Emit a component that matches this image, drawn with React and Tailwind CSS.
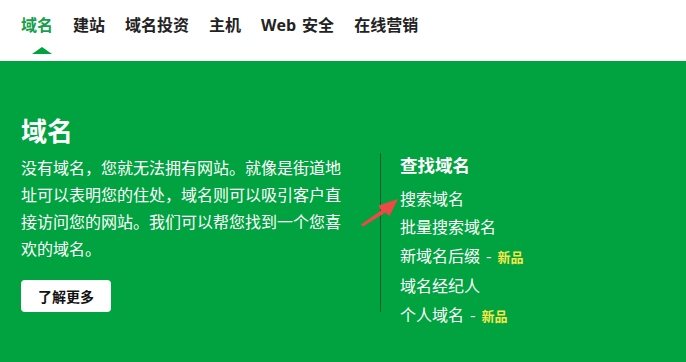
import React from "react";

export default function App() {
  const items = [
    { t: "搜索域名" },
    { t: "批量搜索域名" },
    { t: "新域名后缀", n: true },
    { t: "域名经纪人" },
    { t: "个人域名", n: true },
  ];
  return (
    <div className="w-[686px] h-[362px] overflow-hidden bg-white font-['Open_Sans','Noto_Sans_CJK_SC',sans-serif] relative">
      <nav className="h-[61px] flex items-start gap-[20px] pl-[21px] pt-[14px] text-[16px] leading-[22px] font-bold text-[#222]">
        <div className="relative text-[#16a04a]">
          域名
          <div className="absolute left-[11px] top-[33px] w-0 h-0 border-l-[10px] border-r-[10px] border-b-[7px] border-l-transparent border-r-transparent border-b-[#00a33f]" />
        </div>
        <div>建站</div>
        <div>域名投资</div>
        <div>主机</div>
        <div className="whitespace-nowrap">
          Web<span className="ml-[6px]">安全</span>
        </div>
        <div>在线营销</div>
      </nav>
      <section className="h-[301px] bg-[#00a33f] flex pl-[21px] pt-[53px] text-white font-['Noto_Sans_CJK_SC',sans-serif]">
        <div className="w-[359px] shrink-0">
          <h1 className="text-[26px] leading-[32px] font-bold">域名</h1>
          <p className="mt-[8px] w-[330px] text-[16px] leading-[27px]">
            没有域名，您就无法拥有网站。就像是街道地址可以表明您的住处，域名则可以吸引客户直接访问您的网站。我们可以帮您找到一个您喜欢的域名。
          </p>
          <button className="mt-[18px] w-[90px] h-[32px] rounded-[4px] bg-white text-[#111] text-[14px] font-bold">
            了解更多
          </button>
        </div>
        <div className="flex mt-[37px]">
          <div className="w-px h-[159px] mt-[2px] bg-[#0d5c25]" />
          <div className="ml-[19px]">
            <h2 className="text-[17.5px] leading-[28px] font-bold">查找域名</h2>
            <ul className="mt-[5px]">
              {items.map((it) => (
                <li key={it.t} className="text-[16px] leading-[28.4px] whitespace-nowrap">
                  {it.t}
                  {it.n && (
                    <>
                      <span className="mx-[6px]">-</span>
                      <span className="text-[13px] font-bold text-[#f7e84a]">新品</span>
                    </>
                  )}
                </li>
              ))}
            </ul>
          </div>
        </div>
      </section>
      <svg className="absolute left-0 top-0 pointer-events-none" width="686" height="362">
        <polygon points="361,224.5 381,210.5 378.5,205.5 398,199 389.5,216 385.5,212.5 363,226.5" fill="#ec4a44" />
      </svg>
    </div>
  );
}
